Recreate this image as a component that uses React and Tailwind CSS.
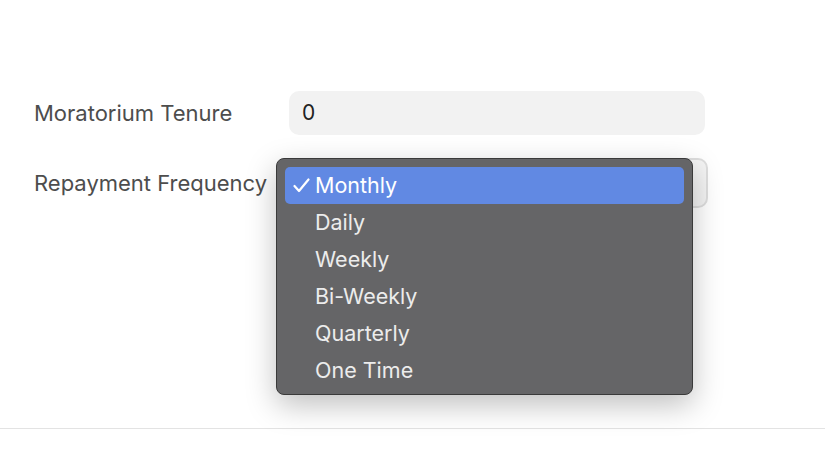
import React from "react";

const items = ["Daily", "Weekly", "Bi-Weekly", "Quarterly", "One Time"];

export default function App() {
  return (
    <div
      className="relative w-[825px] h-[464px] bg-white overflow-hidden"
      style={{ fontFamily: "Inter, 'Noto Sans', sans-serif" }}
    >
      <div className="flex flex-col pt-[91px] pl-[34px] gap-[23px]">
        <div className="flex items-center h-[44px]">
          <div className="w-[255px] text-[22px] text-[#4d4d4d]">Moratorium Tenure</div>
          <div className="w-[416px] h-[44px] rounded-[10px] bg-[#f2f2f2] flex items-center pl-[13px] text-[21px] text-[#222]">
            0
          </div>
        </div>
        <div className="flex items-center h-[50px]">
          <div className="w-[255px] text-[22px] text-[#4d4d4d]">Repayment Frequency</div>
          <div className="w-[419px] h-[50px] rounded-[10px] bg-[#f4f4f4] border-2 border-[#dedede]"></div>
        </div>
      </div>

      <div className="absolute left-0 right-0 top-[428px] h-px bg-[#e3e3e3]"></div>

      <div className="absolute left-[276px] top-[158px] w-[417px] h-[237px] rounded-[8px] bg-[#656567] border border-[#3a3a3a] shadow-[0_10px_30px_rgba(0,0,0,0.25)] px-[8px] pt-[8px]">
        <div className="h-[37px] rounded-[5px] bg-[#6189e3] flex items-center text-white text-[21.5px]">
          <span className="w-[30px] pl-[8px] flex items-center">
            <svg width="17" height="15" viewBox="0 0 17 15" fill="none">
              <path d="M1.5 8 L6 13 L15.5 1.5" stroke="white" strokeWidth="2.2" strokeLinecap="round" strokeLinejoin="round" />
            </svg>
          </span>
          <span>Monthly</span>
        </div>
        {items.map((t) => (
          <div key={t} className="h-[37px] flex items-center pl-[30px] text-[21.5px] text-[#ececec]">
            {t}
          </div>
        ))}
      </div>
    </div>
  );
}
